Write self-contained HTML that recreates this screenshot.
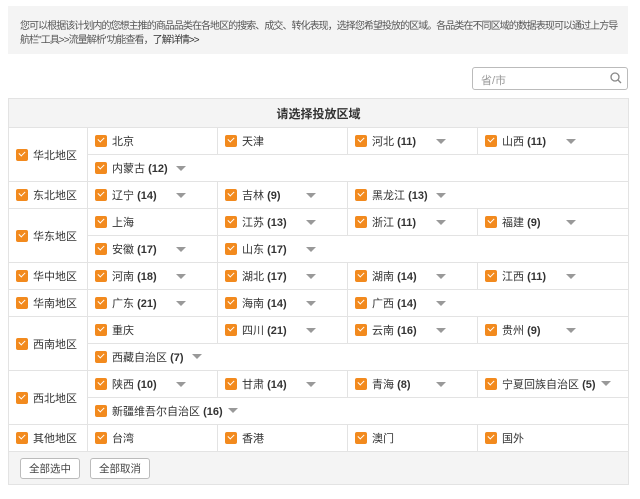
<!DOCTYPE html>
<html><head><meta charset="utf-8"><style>
body{margin:0;width:640px;height:499px;background:#fff;font-family:"Liberation Sans","Noto Sans CJK SC",sans-serif;font-size:11px;color:#333;position:relative;overflow:hidden}
.info{position:absolute;left:8px;top:6px;width:608px;height:34px;background:#f4f4f4;padding:14px 0 0 12px;line-height:14px;color:#555;font-size:10px;letter-spacing:-0.95px;white-space:nowrap}
.info b{font-weight:normal;color:#333}
.search{position:absolute;left:472px;top:67px;width:156px;height:23px;border:1px solid #bbb;border-radius:3px;box-sizing:border-box}
.search span{position:absolute;left:8px;top:4px;color:#999;font-size:11px}
table{position:absolute;left:8px;top:98px;border-collapse:collapse;width:621px;table-layout:fixed}
td{border:1px solid #e3e3e3;height:26px;padding:0 0 0 7px;white-space:nowrap;vertical-align:middle;position:relative}
th{height:28px;background:#f4f4f4;border:1px solid #e3e3e3;font-size:12px;font-weight:bold;padding:0}
.cb{display:inline-block;width:12px;height:12px;background:#f28a1e;border-radius:2px;vertical-align:-2px;margin-right:5px;position:relative}
.cb:after{content:"";position:absolute;left:3px;top:2px;width:5px;height:3px;border-left:1.3px solid #fff;border-bottom:1.3px solid #fff;transform:rotate(-45deg)}
.n{font-weight:bold}
.ar{position:absolute;width:0;height:0;border-left:5px solid transparent;border-right:5px solid transparent;border-top:5px solid #999;left:88px;top:11px}
.ai{display:inline-block;width:0;height:0;border-left:5px solid transparent;border-right:5px solid transparent;border-top:5px solid #999;margin-left:5px;vertical-align:2px}
.ft{background:#f4f4f4;height:32px}
.btn{display:inline-block;border:1px solid #bbb;border-radius:3px;background:#fff;padding:2px 8px;font-size:10.5px;margin-right:10px;color:#444}
</style></head><body>
<div class="info">您可以根据该计划内的您想主推的商品品类在各地区的搜索、成交、转化表现，选择您希望投放的区域。各品类在不同区域的数据表现可以通过上方导<br>航栏"工具&gt;&gt;流量解析"功能查看，<b>了解详情&gt;&gt;</b></div>
<div class="search"><span>省/市</span><svg style="position:absolute;right:5px;top:4px" width="12" height="12" viewBox="0 0 12 12"><circle cx="5" cy="5" r="4" fill="none" stroke="#888" stroke-width="1.3"/><path d="M8 8l3 3" stroke="#888" stroke-width="1.3"/></svg></div>
<table>
<colgroup><col style="width:79px"><col style="width:130px"><col style="width:130px"><col style="width:130px"><col></colgroup>
<tr><th colspan="5">请选择投放区域</th></tr>
<tr><td rowspan="2"><i class="cb"></i>华北地区</td><td><i class="cb"></i>北京</td><td><i class="cb"></i>天津</td><td><i class="cb"></i>河北 <span class="n">(11)</span><i class="ar"></i></td><td><i class="cb"></i>山西 <span class="n">(11)</span><i class="ar"></i></td></tr>
<tr><td colspan="4"><i class="cb"></i>内蒙古 <span class="n">(12)</span><i class="ar"></i></td></tr>
<tr><td><i class="cb"></i>东北地区</td><td><i class="cb"></i>辽宁 <span class="n">(14)</span><i class="ar"></i></td><td><i class="cb"></i>吉林 <span class="n">(9)</span><i class="ar"></i></td><td colspan="2"><i class="cb"></i>黑龙江 <span class="n">(13)</span><i class="ar"></i></td></tr>
<tr><td rowspan="2"><i class="cb"></i>华东地区</td><td><i class="cb"></i>上海</td><td><i class="cb"></i>江苏 <span class="n">(13)</span><i class="ar"></i></td><td><i class="cb"></i>浙江 <span class="n">(11)</span><i class="ar"></i></td><td><i class="cb"></i>福建 <span class="n">(9)</span><i class="ar"></i></td></tr>
<tr><td><i class="cb"></i>安徽 <span class="n">(17)</span><i class="ar"></i></td><td colspan="3"><i class="cb"></i>山东 <span class="n">(17)</span><i class="ar"></i></td></tr>
<tr><td><i class="cb"></i>华中地区</td><td><i class="cb"></i>河南 <span class="n">(18)</span><i class="ar"></i></td><td><i class="cb"></i>湖北 <span class="n">(17)</span><i class="ar"></i></td><td><i class="cb"></i>湖南 <span class="n">(14)</span><i class="ar"></i></td><td><i class="cb"></i>江西 <span class="n">(11)</span><i class="ar"></i></td></tr>
<tr><td><i class="cb"></i>华南地区</td><td><i class="cb"></i>广东 <span class="n">(21)</span><i class="ar"></i></td><td><i class="cb"></i>海南 <span class="n">(14)</span><i class="ar"></i></td><td colspan="2"><i class="cb"></i>广西 <span class="n">(14)</span><i class="ar"></i></td></tr>
<tr><td rowspan="2"><i class="cb"></i>西南地区</td><td><i class="cb"></i>重庆</td><td><i class="cb"></i>四川 <span class="n">(21)</span><i class="ar"></i></td><td><i class="cb"></i>云南 <span class="n">(16)</span><i class="ar"></i></td><td><i class="cb"></i>贵州 <span class="n">(9)</span><i class="ar"></i></td></tr>
<tr><td colspan="4"><i class="cb"></i>西藏自治区 <span class="n">(7)</span><i class="ai" style="margin-left:8px"></i></td></tr>
<tr><td rowspan="2"><i class="cb"></i>西北地区</td><td><i class="cb"></i>陕西 <span class="n">(10)</span><i class="ar"></i></td><td><i class="cb"></i>甘肃 <span class="n">(14)</span><i class="ar"></i></td><td><i class="cb"></i>青海 <span class="n">(8)</span><i class="ar"></i></td><td><i class="cb"></i>宁夏回族自治区 <span class="n">(5)</span><i class="ai"></i></td></tr>
<tr><td colspan="4"><i class="cb"></i>新疆维吾尔自治区 <span class="n">(16)</span><i class="ai"></i></td></tr>
<tr><td><i class="cb"></i>其他地区</td><td><i class="cb"></i>台湾</td><td><i class="cb"></i>香港</td><td><i class="cb"></i>澳门</td><td><i class="cb"></i>国外</td></tr>
<tr><td colspan="5" class="ft" style="padding-left:11px"><span class="btn">全部选中</span><span class="btn">全部取消</span></td></tr>
</table>
</body></html>
